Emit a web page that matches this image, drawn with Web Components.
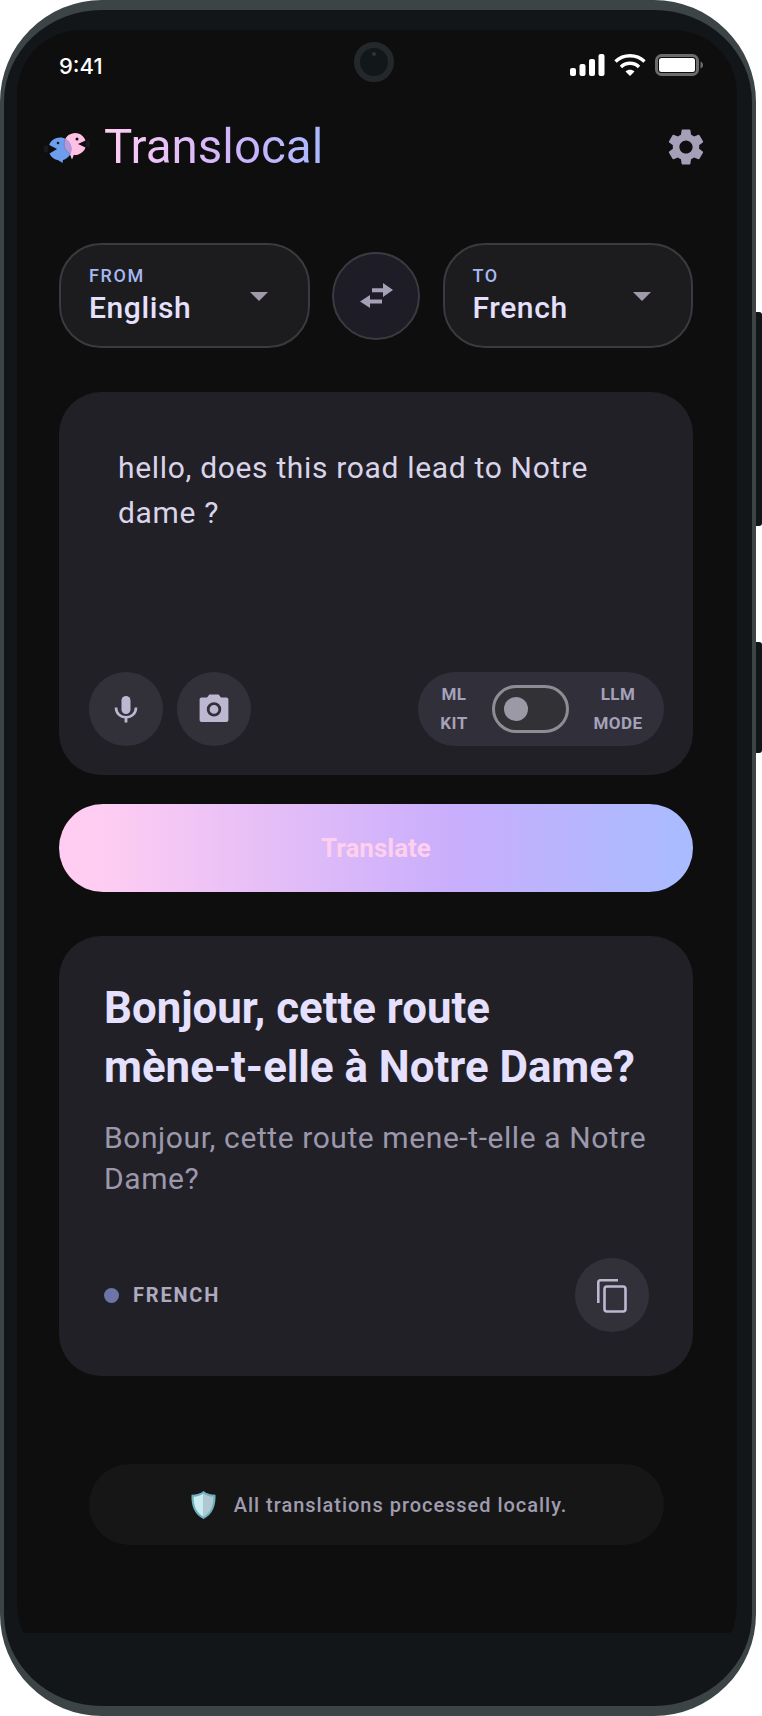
<!DOCTYPE html>
<html lang="en">
<head>
<meta charset="utf-8">
<title>Translocal</title>
<style>
  html, body { margin: 0; padding: 0; background: #fff; }
  body { font-family: Roboto, "Liberation Sans", sans-serif; }
</style>
</head>
<body>
<phone-frame>
  <status-bar></status-bar>
  <app-header>Translocal</app-header>
  <language-row>
    <language-select label="From">English</language-select>
    <swap-button></swap-button>
    <language-select label="To">French</language-select>
  </language-row>
  <input-card>
    hello, does this road lead to Notre dame ?
    <icon-button slot="actions" icon="mic"></icon-button>
    <icon-button slot="actions" icon="camera"></icon-button>
    <engine-toggle slot="toggle"></engine-toggle>
  </input-card>
  <translate-button>Translate</translate-button>
  <result-card>
    <span slot="title">Bonjour, cette route<br>mène-t-elle à Notre Dame?</span>
    <span slot="subtitle">Bonjour, cette route mene-t-elle a Notre<br>Dame?</span>
    <span slot="language">French</span>
    <icon-button slot="copy" icon="copy"></icon-button>
  </result-card>
  <privacy-note>All translations processed locally.</privacy-note>
</phone-frame>

<script>
// --- 1. ICONS ---

const icons = {
    mic: `<svg width="32" height="32" viewBox="0 0 32 32" fill="none">
        <rect x="11.5" y="3" width="9" height="18" rx="4.5" fill="#bdb7d2"/>
        <path d="M6 14.5c0 6 4.4 9.7 10 9.7s10-3.7 10-9.7" stroke="#bdb7d2" stroke-width="2.6"/>
        <path d="M16 24v5.5" stroke="#bdb7d2" stroke-width="2.8"/>
    </svg>`,
    camera: `<svg width="32" height="32" viewBox="0 0 32 32">
        <path fill="#bdb7d2" fill-rule="evenodd" d="M11.4 1.5h9.2l2.4 3h5.4c1.1 0 2 .9 2 2V27c0 1.1-.9 2-2 2H3.6c-1.1 0-2-.9-2-2V6.500c0-1.100.9-2 2-2H9zM16 9.200a7.200 7.200 0 1 0 0 14.400a7.200 7.200 0 0 0 0-14.400zM16 12a4.400 4.400 0 1 1 0 8.800a4.400 4.400 0 0 1 0-8.800z"/>
    </svg>`,
    copy: `<svg width="31" height="35" viewBox="0 0 31 35" fill="none" stroke="#bdb7d2" stroke-width="2.600" style="margin-left:-2px">
        <path d="M2.300 25V4.500c0-1.200 1-2.200 2.200-2.200h17.500"/>
        <rect x="8.500" y="8.500" width="21" height="25" rx="2.500"/>
    </svg>`
};


// --- 2. COMPONENTS ---

class PhoneFrame extends HTMLElement {
    constructor() {
        super();
        this.attachShadow({ mode: 'open' });
        this.shadowRoot.innerHTML = `
            <style>
                :host { display: block; position: relative; width: 756px; height: 1716px; box-sizing: border-box;
                    background: #121618; border: solid #3c4446; border-width: 10px 4px; border-radius: 102px;
                    padding: 20px 15px 73px 13px; }
                .screen { height: 100%; box-sizing: border-box; overflow: hidden; background: #0e0e0e;
                    border-radius: 64px 64px 8px 8px / 64px 64px 36px 36px; padding-bottom: 1px; }
                .camera { position: absolute; left: 350px; top: 32px; width: 40px; height: 40px; box-sizing: border-box;
                    border-radius: 50%; background: #12181a; border: 6px solid #23292b; }
                .camera::after { content: ""; position: absolute; left: 12px; top: 4px; width: 4px; height: 4px;
                    border-radius: 50%; background: #2d3537; }
                .key { position: absolute; left: 752px; width: 6px; background: #121618; border-radius: 0 3px 3px 0; }
                .power { top: 302px; height: 214px; }
                .volume { top: 632px; height: 111px; }
            </style>
            <div class="screen"><slot></slot></div>
            <div class="camera"></div>
            <div class="key power"></div>
            <div class="key volume"></div>`;
    }
}
customElements.define('phone-frame', PhoneFrame);

class StatusBar extends HTMLElement {
    constructor() {
        super();
        this.attachShadow({ mode: 'open' });
        this.shadowRoot.innerHTML = `
            <style>
                :host { display: flex; align-items: center; height: 70px; padding: 0 34px 0 42px;
                    font: 500 22px Inter, Roboto, sans-serif; color: #fff; }
                .time { flex: 1; padding-top: 2px; }
                .icons { display: flex; align-items: center; gap: 9px; }
                svg { display: block; }
            </style>
            <span class="time">9:41</span>
            <div class="icons">
                <svg width="35" height="22" viewBox="0 0 35 22" fill="#fff">
                    <rect x="0" y="14" width="6" height="8" rx="2"/>
                    <rect x="9.500" y="10" width="6" height="12" rx="2"/>
                    <rect x="19" y="5" width="6" height="17" rx="2"/>
                    <rect x="28.500" y="0" width="6" height="22" rx="2"/>
                </svg>
                <svg width="32" height="22" viewBox="0 0 32 22" fill="none" stroke="#fff" stroke-width="3.400">
                    <path d="M1.500 7.500C5.500 3.700 10.500 1.800 16 1.800s10.500 1.900 14.500 5.700"/>
                    <path d="M7 13c2.400-2.400 5.500-3.700 9-3.700s6.600 1.300 9 3.700"/>
                    <path d="M11.500 17.500L16 22l4.500-4.500c-1.200-1.100-2.700-1.700-4.500-1.700s-3.300.6-4.500 1.700z" fill="#fff" stroke="none"/>
                </svg>
                <svg width="48" height="22" viewBox="0 0 48 22">
                    <rect x="1.500" y="1.500" width="41" height="19" rx="5" fill="none" stroke="#6c6c6c" stroke-width="3"/>
                    <rect x="4" y="4" width="36" height="14" rx="2.500" fill="#fff"/>
                    <path d="M45.500 7.500c1.500.5 2.500 1.800 2.500 3.500s-1 3-2.500 3.500z" fill="#6c6c6c"/>
                </svg>
            </div>`;
    }
}
customElements.define('status-bar', StatusBar);

class AppHeader extends HTMLElement {
    constructor() {
        super();
        this.attachShadow({ mode: 'open' });
        this.shadowRoot.innerHTML = `
            <style>
                :host { display: flex; align-items: center; gap: 14px; height: 94px; padding: 0 29px 0 27px; }
                .title { flex: 1; font: 400 47.5px/54px Roboto, sans-serif; }
                .title span { background: linear-gradient(90deg, #ffcdf2 0%, #d0b4fb 58%, #a8baff 100%);
                    -webkit-background-clip: text; background-clip: text; color: transparent; }
                svg { display: block; }
            </style>
            <svg width="46" height="31" viewBox="0 0 46 31" style="margin-top:1px">
                <defs><clipPath id="blue-body"><circle cx="16" cy="17" r="11.500"/></clipPath></defs>
                <!-- pink fish -->
                <path fill="#ffc0e4" d="M41.500 8.500A11 11 0 1 0 41.500 15.500L34 12Z"/>
                <path fill="#ffc0e4" d="M25 20l5 2.500-2 5z"/>
                <circle cx="33" cy="7" r="1.500" fill="#10131a"/>
                <path d="M43 9v6M45 8.500v7" stroke="#4a4458" stroke-width=".6" opacity=".7"/>
                <!-- blue fish -->
                <path fill="#6d9eee" d="M5.200 13A11.500 11.500 0 1 1 5.500 21.600L13 17Z"/>
                <path fill="#6d9eee" d="M14 28l5 0-.5 3z"/>
                <circle cx="14" cy="11" r="1.300" fill="#10131a"/>
                <path d="M1 14v6M3 13.500v7" stroke="#3e4a68" stroke-width=".6" opacity=".7"/>
                <!-- overlap -->
                <circle cx="31" cy="12" r="11" fill="#b49ad8" stroke="#7d68a8" stroke-width=".6" clip-path="url(#blue-body)"/>
            </svg>
            <div class="title"><span><slot></slot></span></div>
            <svg width="44" height="44" viewBox="0 0 24 24" fill="#a59fb8">
                <path d="M19.140 12.940c.04-.3.060-.61.060-.94 0-.32-.020-.64-.070-.94l2.030-1.580a.49.490 0 0 0 .120-.610l-1.920-3.320a.488.488 0 0 0-.590-.220l-2.390.96c-.5-.38-1.030-.7-1.620-.94l-.36-2.540a.484.484 0 0 0-.480-.410h-3.840c-.24 0-.430.170-.470.410l-.36 2.540c-.59.240-1.130.570-1.620.94l-2.390-.96c-.22-.080-.470 0-.590.220L2.740 8.870c-.12.210-.080.470.120.610l2.030 1.580c-.05.300-.090.630-.090.940s.020.640.070.940l-2.030 1.580a.49.490 0 0 0-.120.610l1.920 3.320c.12.220.370.290.590.220l2.390-.96c.5.380 1.030.7 1.620.94l.36 2.540c.05.240.240.410.480.410h3.840c.24 0 .440-.170.470-.410l.36-2.540c.59-.240 1.130-.560 1.620-.94l2.390.96c.22.080.470 0 .590-.220l1.920-3.320c.12-.220.070-.470-.120-.610l-2.010-1.580zM12 15.600c-1.980 0-3.600-1.620-3.600-3.600s1.620-3.600 3.600-3.600 3.600 1.620 3.600 3.600-1.620 3.600-3.600 3.600z"/>
            </svg>`;
    }
}
customElements.define('app-header', AppHeader);

class LanguageRow extends HTMLElement {
    constructor() {
        super();
        this.attachShadow({ mode: 'open' });
        this.shadowRoot.innerHTML = `
            <style>
                :host { display: flex; align-items: center; gap: 22.5px; margin: 49px 44px 0 42px; }
            </style>
            <slot></slot>`;
    }
}
customElements.define('language-row', LanguageRow);

class LanguageSelect extends HTMLElement {
    constructor() {
        super();
        this.attachShadow({ mode: 'open' });
        this.shadowRoot.innerHTML = `
            <style>
                :host { display: flex; align-items: center; flex: 1; height: 105px; box-sizing: border-box;
                    padding: 0 40px 0 28px; background: #1c1c1e; border: 2px solid #3a3a40; border-radius: 42px; }
                .text { flex: 1; }
                .label { font: 500 18px/20px Roboto, sans-serif; letter-spacing: 1.600px; text-transform: uppercase; color: #a6b8f4; }
                .value { font: 500 30px/36px Roboto, sans-serif; letter-spacing: .6px; color: #e6e0ff; margin-top: 4px; }
                .arrow { width: 0; height: 0; margin-top: 2px; border: solid transparent;
                    border-width: 9px 9px 0; border-top-color: #a09aaa; }
            </style>
            <div class="text">
                <div class="label">${this.getAttribute('label')}</div>
                <div class="value"><slot></slot></div>
            </div>
            <div class="arrow"></div>`;
    }
}
customElements.define('language-select', LanguageSelect);

class SwapButton extends HTMLElement {
    constructor() {
        super();
        this.attachShadow({ mode: 'open' });
        this.shadowRoot.innerHTML = `
            <style>
                :host { display: flex; align-items: center; justify-content: center; flex: none;
                    width: 88px; height: 88px; box-sizing: border-box; border-radius: 50%;
                    background: #1e1c26; border: 2px solid #3a3a42; }
            </style>
            <svg width="33" height="25" viewBox="0 0 33 25" fill="#a59fb8">
                <path d="M12 5.300h11V0l10 7-10 7V9.300H12z"/>
                <path d="M22 16.500H10V12L0 18.500 10 25v-4.500h12z"/>
            </svg>`;
    }
}
customElements.define('swap-button', SwapButton);

class IconButton extends HTMLElement {
    constructor() {
        super();
        this.attachShadow({ mode: 'open' });
        this.shadowRoot.innerHTML = `
            <style>
                :host { display: flex; align-items: center; justify-content: center; flex: none;
                    width: 74px; height: 74px; border-radius: 50%; background: #32313a; }
                svg { display: block; }
            </style>
            ${icons[this.getAttribute('icon')]}`;
    }
}
customElements.define('icon-button', IconButton);

class EngineToggle extends HTMLElement {
    constructor() {
        super();
        this.attachShadow({ mode: 'open' });
        this.shadowRoot.innerHTML = `
            <style>
                :host { display: flex; align-items: center; width: 246px; height: 74px;
                    box-sizing: border-box; padding: 0 20px 0 10px; border-radius: 37px; background: #302f3a;
                    font: 700 17px/29.500px Roboto, sans-serif; letter-spacing: .4px; color: #a5a2b8; text-align: center; }
                .side { width: 52px; }
                .track { width: 77px; height: 48px; box-sizing: border-box; border: 3px solid #8e8c95; border-radius: 24px;
                    background: #323236; display: flex; align-items: center; padding-left: 9px; margin: 0 23px 0 12px; }
                .thumb { width: 24px; height: 24px; border-radius: 50%; background: #9c99a6; }
            </style>
            <div class="side">ML<br>KIT</div>
            <div class="track"><div class="thumb"></div></div>
            <div class="side">LLM<br>MODE</div>`;
    }
}
customElements.define('engine-toggle', EngineToggle);

class InputCard extends HTMLElement {
    constructor() {
        super();
        this.attachShadow({ mode: 'open' });
        this.shadowRoot.innerHTML = `
            <style>
                :host { display: flex; flex-direction: column; height: 383px; box-sizing: border-box;
                    margin: 44px 44px 0 42px; padding: 53px 29px 29px 30px; background: #212026; border-radius: 42px; }
                .text { flex: 1; width: 530px; padding-left: 29px; font: 400 30px/45px Roboto, sans-serif;
                    letter-spacing: .67px; color: #d9d4ea; }
                .bar { display: flex; align-items: center; gap: 14px; }
                .spacer { flex: 1; }
                .actions { display: flex; gap: 14px; }
            </style>
            <div class="text"><slot></slot></div>
            <div class="bar">
                <div class="actions"><slot name="actions"></slot></div>
                <div class="spacer"></div>
                <slot name="toggle"></slot>
            </div>`;
    }
}
customElements.define('input-card', InputCard);

class TranslateButton extends HTMLElement {
    constructor() {
        super();
        this.attachShadow({ mode: 'open' });
        this.shadowRoot.innerHTML = `
            <style>
                :host { display: flex; align-items: center; justify-content: center; height: 88px;
                    margin: 29px 44px 0 42px; border-radius: 44px;
                    background: linear-gradient(90deg, #ffcdf2 6%, #c9aefc 62%, #a8bcff 100%);
                    font: 700 26px Roboto, sans-serif; color: #ffcfee; }
            </style>
            <slot></slot>`;
    }
}
customElements.define('translate-button', TranslateButton);

class ResultCard extends HTMLElement {
    constructor() {
        super();
        this.attachShadow({ mode: 'open' });
        this.shadowRoot.innerHTML = `
            <style>
                :host { display: flex; flex-direction: column; height: 440px; box-sizing: border-box;
                    margin: 44px 44px 0 42px; padding: 43px 44px 44px 45px; background: #212026; border-radius: 42px; }
                .title { font: 700 43.8px/59px Roboto, sans-serif; color: #e6e0ff; }
                .subtitle { flex: 1; margin-top: 20px; font: 400 30px/41px Roboto, sans-serif;
                    letter-spacing: .58px; color: #9c98ac; }
                .footer { display: flex; align-items: center; gap: 14px; }
                .dot { width: 15px; height: 15px; border-radius: 50%; background: #6c74a8; }
                .language { flex: 1; font: 700 20px Roboto, sans-serif; letter-spacing: 1.800px;
                    text-transform: uppercase; color: #aeaabf; }
            </style>
            <div class="title"><slot name="title"></slot></div>
            <div class="subtitle"><slot name="subtitle"></slot></div>
            <div class="footer">
                <div class="dot"></div>
                <div class="language"><slot name="language"></slot></div>
                <slot name="copy"></slot>
            </div>`;
    }
}
customElements.define('result-card', ResultCard);

class PrivacyNote extends HTMLElement {
    constructor() {
        super();
        this.attachShadow({ mode: 'open' });
        this.shadowRoot.innerHTML = `
            <style>
                :host { display: flex; align-items: center; justify-content: center; gap: 18px; height: 81px;
                    margin: 88px 73px 0 72px; padding-left: 5px; border-radius: 41px; background: #161616;
                    font: 500 20px Roboto, sans-serif; letter-spacing: .97px; color: #a09cb0; }
                svg { display: block; }
            </style>
            <svg width="25" height="28" viewBox="0 0 25 28">
                <path fill="#6fb0c0" d="M12.500 0c3 2.500 7 3.800 12 3.800.5 10.500-2.500 19.500-12 24.200C3 23.300 0 14.300.500 3.800c5 0 9-1.300 12-3.800z"/>
                <path fill="#c9ecf0" d="M12.500 2.500C9.800 4.500 6.600 5.500 2.700 5.700c-.2 8.700 2.300 15.800 9.800 20z"/>
                <path fill="#b2c8d0" d="M12.500 2.500c2.700 2 5.900 3 9.800 3.200.2 8.700-2.300 15.800-9.800 20z"/>
            </svg>
            <span><slot></slot></span>`;
    }
}
customElements.define('privacy-note', PrivacyNote);
</script>
</body>
</html>
